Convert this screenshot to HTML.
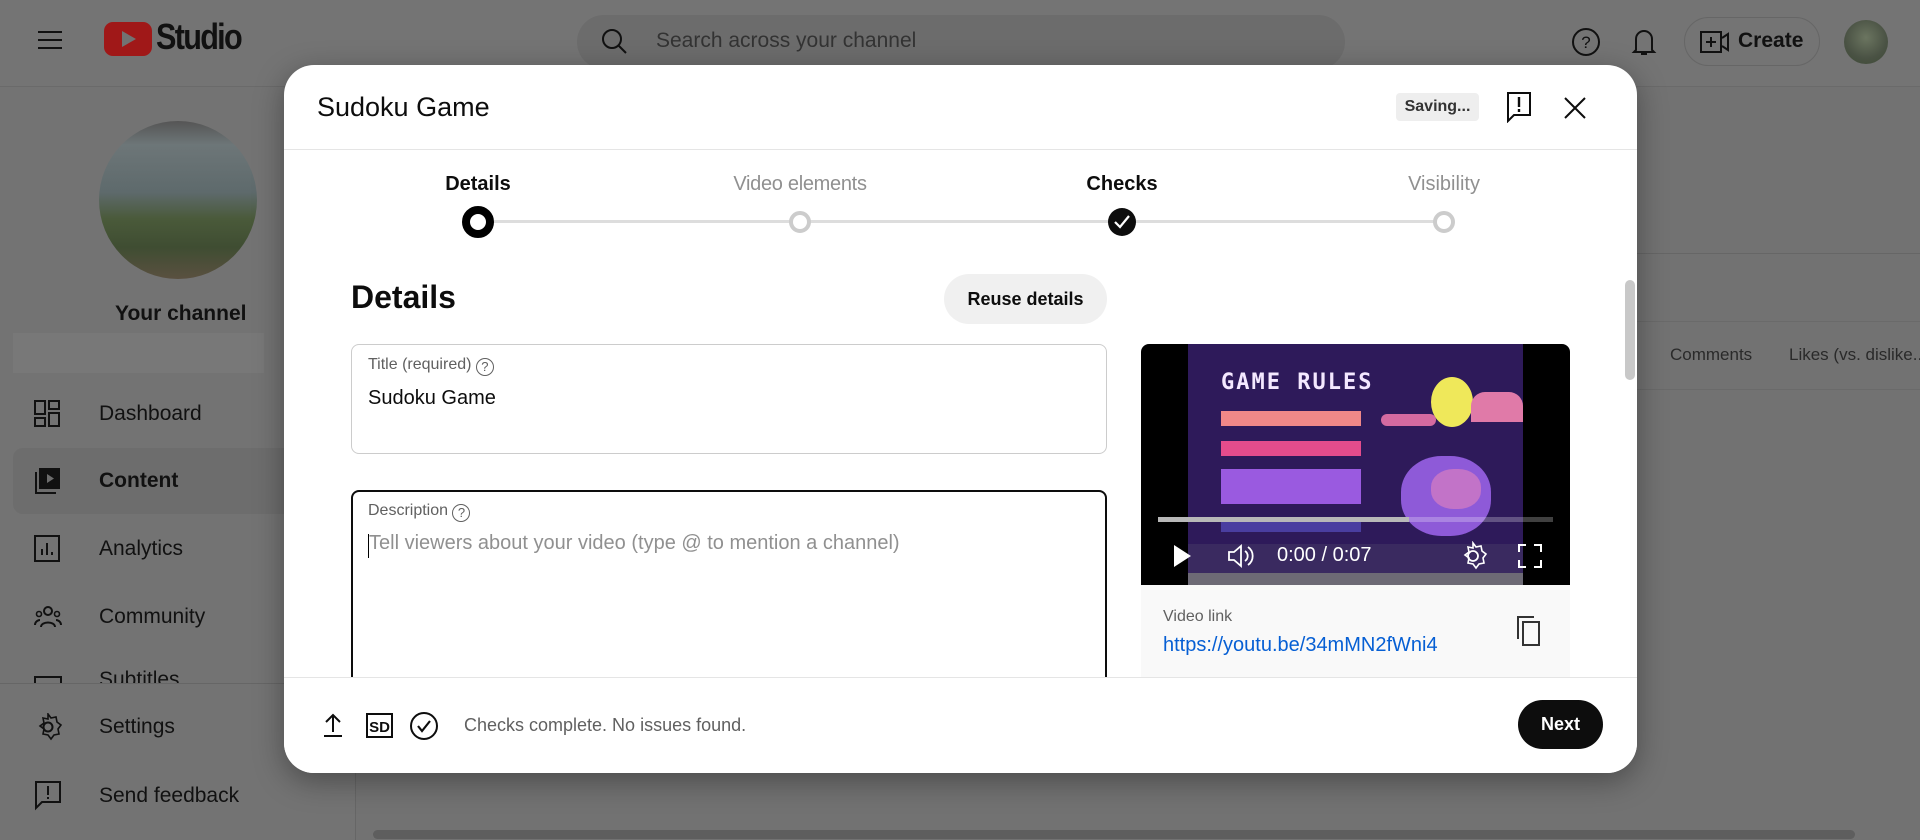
<!DOCTYPE html>
<html><head><meta charset="utf-8"><style>
*{box-sizing:border-box;margin:0;padding:0}
body{width:1920px;height:840px;overflow:hidden;background:#727272;font-family:"Liberation Sans",Roboto,sans-serif;position:relative;color:#0d0d0d}
.abs{position:absolute}
.side{left:0;top:87px;width:356px;height:753px;background:#737373;border-right:1px solid #666}
.mi{position:absolute;left:99px;font-size:21px;color:#111}
.ic{position:absolute;left:34px}
.modal{left:284px;top:65px;width:1353px;height:708px;background:#fff;border-radius:30px;box-shadow:0 8px 30px rgba(0,0,0,.35);overflow:hidden}
.lbl{font-size:20px;position:absolute;transform:translateX(-50%);white-space:nowrap}
.dot{position:absolute;width:18px;height:18px;border-radius:50%;border:3px solid #ccc;background:#fff;transform:translate(-50%,-50%)}
</style></head><body>
<div class="abs" style="left:0;top:0;width:1920px;height:87px;background:#747474;border-bottom:1px solid #6a6a6a"></div>
<svg class="abs" style="left:36px;top:28px" width="28" height="24"><path d="M2 4h24M2 12h24M2 20h24" stroke="#111" stroke-width="2"/></svg>
<div class="abs" style="left:104px;top:22px;width:48px;height:34px;background:#a01818;border-radius:9px"></div>
<svg class="abs" style="left:120px;top:30px" width="18" height="18"><path d="M2 1L16 9L2 17Z" fill="#727272"/></svg>
<div class="abs" style="left:156px;top:16px;font-size:36px;font-weight:bold;letter-spacing:-2px;color:#111;transform:scaleX(.85);transform-origin:left">Studio</div>
<div class="abs" style="left:577px;top:15px;width:768px;height:54px;background:#6c6c6c;border-radius:27px"></div>
<svg class="abs" style="left:600px;top:27px" width="30" height="30"><circle cx="12" cy="12" r="9" stroke="#111" stroke-width="2" fill="none"/><path d="M18 18l8 8" stroke="#111" stroke-width="2"/></svg>
<div class="abs" style="left:656px;top:29px;font-size:21px;color:#333">Search across your channel</div>
<svg class="abs" style="left:1571px;top:27px" width="30" height="30"><circle cx="15" cy="15" r="13" stroke="#111" stroke-width="2" fill="none"/><text x="15" y="21" font-size="17" text-anchor="middle" font-family="Liberation Sans" fill="#111">?</text></svg>
<svg class="abs" style="left:1630px;top:26px" width="28" height="32"><path d="M6 24V13a8 8 0 0 1 16 0v11l2 2H4z" stroke="#111" stroke-width="2" fill="none"/><path d="M11 28h6" stroke="#111" stroke-width="2"/></svg>
<div class="abs" style="left:1684px;top:17px;width:136px;height:49px;border:1px solid #666;border-radius:25px"></div>
<svg class="abs" style="left:1700px;top:30px" width="30" height="24"><rect x="1" y="2" width="20" height="20" stroke="#111" stroke-width="2" fill="none"/><path d="M11 7v10M6 12h10M22 8l6-4v16l-6-4" stroke="#111" stroke-width="2" fill="none"/></svg>
<div class="abs" style="left:1738px;top:29px;font-size:21px;font-weight:bold;color:#111">Create</div>
<div class="abs" style="left:1844px;top:20px;width:44px;height:44px;border-radius:50%;background:radial-gradient(circle at 50% 40%,#6b7560,#4a5244 60%,#3d4a35)"></div>
<div class="abs side"></div>
<div class="abs" style="left:99px;top:121px;width:158px;height:158px;border-radius:50%;background:linear-gradient(180deg,#555 0%,#6d7678 15%,#5e6a6c 45%,#4a5a3a 62%,#3f4d32 80%,#5a5040 100%)"></div>
<div class="abs" style="left:115px;top:302px;font-size:21px;font-weight:bold;color:#111">Your channel</div>
<div class="abs" style="left:13px;top:333px;width:251px;height:40px;background:#787878"></div>
<div class="abs" style="left:13px;top:448px;width:330px;height:66px;background:#6d6d6d;border-radius:10px"></div>
<svg class="ic" style="top:400px" width="28" height="28"><rect x="1" y="1" width="10" height="13" stroke="#111" stroke-width="2" fill="none"/><rect x="15" y="1" width="10" height="8" stroke="#111" stroke-width="2" fill="none"/><rect x="1" y="18" width="10" height="8" stroke="#111" stroke-width="2" fill="none"/><rect x="15" y="13" width="10" height="13" stroke="#111" stroke-width="2" fill="none"/></svg>
<div class="mi" style="top:402px">Dashboard</div>
<svg class="ic" style="top:467px" width="28" height="28"><rect x="5" y="1" width="21" height="21" fill="#111"/><path d="M13 7l7 4.5-7 4.5z" fill="#6d6d6d"/><path d="M2 5v21h20" stroke="#111" stroke-width="2" fill="none"/></svg>
<div class="mi" style="top:469px;font-weight:bold">Content</div>
<svg class="ic" style="top:535px" width="28" height="28"><rect x="1" y="1" width="24" height="25" stroke="#111" stroke-width="2" fill="none"/><path d="M8 20v-6M13 20V8M18 20v-3" stroke="#111" stroke-width="2"/></svg>
<div class="mi" style="top:537px">Analytics</div>
<svg class="ic" style="top:603px" width="28" height="28"><circle cx="14" cy="8" r="4" stroke="#111" stroke-width="2" fill="none"/><circle cx="5" cy="11" r="2.5" stroke="#111" stroke-width="1.6" fill="none"/><circle cx="23" cy="11" r="2.5" stroke="#111" stroke-width="1.6" fill="none"/><path d="M7 24c0-6 14-6 14 0M1 22c0-4 4-5 5-5M27 22c0-4-4-5-5-5" stroke="#111" stroke-width="2" fill="none"/></svg>
<div class="mi" style="top:605px">Community</div>
<div class="abs" style="left:34px;top:676px;width:28px;height:7px;border:2px solid #111;border-bottom:none"></div>
<div class="mi" style="top:668px;height:15px;overflow:hidden">Subtitles</div>
<div class="abs" style="left:0;top:683px;width:356px;height:1px;background:#666"></div>
<svg class="ic" style="top:713px" width="28" height="28"><circle cx="14" cy="14" r="4.5" stroke="#111" stroke-width="2" fill="none"/><path d="M14 1l3 4 5-1 1 5 4 3-3 4 1 5-5 1-3 4-3-4-5-1 1-5-4-3 4-3-1-5 5 1z" stroke="#111" stroke-width="1.6" fill="none"/></svg>
<div class="mi" style="top:715px">Settings</div>
<svg class="ic" style="top:780px" width="28" height="32"><path d="M2 2h24v20H8l-6 6z" stroke="#111" stroke-width="2" fill="none"/><path d="M14 6v9M14 17v2" stroke="#111" stroke-width="2"/></svg>
<div class="mi" style="top:784px">Send feedback</div>
<div class="abs" style="left:1637px;top:253px;width:283px;height:1px;background:#666"></div>
<div class="abs" style="left:1637px;top:321px;width:283px;height:1px;background:#6a6a6a"></div>
<div class="abs" style="left:1670px;top:345px;font-size:17px;color:#2a2a2a">Comments</div>
<div class="abs" style="left:1789px;top:345px;font-size:17px;color:#2a2a2a;white-space:nowrap">Likes (vs. dislike...</div>
<div class="abs" style="left:1637px;top:389px;width:283px;height:1px;background:#6a6a6a"></div>
<div class="abs" style="left:373px;top:830px;width:1482px;height:9px;background:#5e5e5e;border-radius:5px"></div>

<div class="abs modal">
  <div class="abs" style="left:33px;top:27px;font-size:27px;color:#0d0d0d">Sudoku Game</div>
  <div class="abs" style="left:1112px;top:28px;width:83px;height:28px;background:#eee;border-radius:4px;font-size:16px;font-weight:bold;color:#333;text-align:center;line-height:28px">Saving...</div>
  <svg class="abs" style="left:1222px;top:26px" width="26" height="32"><path d="M2 2h22v22H8l-6 6z" stroke="#0d0d0d" stroke-width="2" fill="none"/><path d="M13 6v10M13 18v3" stroke="#0d0d0d" stroke-width="2.4"/></svg>
  <svg class="abs" style="left:1279px;top:31px" width="24" height="24"><path d="M2 2l20 20M22 2L2 22" stroke="#0d0d0d" stroke-width="2"/></svg>
  <div class="abs" style="left:0;top:84px;width:1353px;height:1px;background:#e5e5e5"></div>
  <div class="abs" style="left:194px;top:155px;width:964px;height:3px;background:#ddd"></div>
  <div class="lbl" style="left:194px;top:108px;font-weight:bold">Details</div>
  <div class="lbl" style="left:516px;top:108px;color:#909090;letter-spacing:-0.3px">Video elements</div>
  <div class="lbl" style="left:838px;top:108px;font-weight:bold">Checks</div>
  <div class="lbl" style="left:1160px;top:108px;color:#909090">Visibility</div>
  <div class="dot" style="left:194px;top:157px;width:32px;height:32px;border:8px solid #000"></div>
  <div class="dot" style="left:516px;top:157px;width:22px;height:22px;border:4px solid #ccc"></div>
  <div class="dot" style="left:838px;top:157px;width:28px;height:28px;border:none;background:#0d0d0d"></div>
  <svg class="abs" style="left:828px;top:148px" width="20" height="18"><path d="M3 9l5 5 9-11" stroke="#fff" stroke-width="2.2" fill="none"/></svg>
  <div class="dot" style="left:1160px;top:157px;width:22px;height:22px;border:4px solid #ccc"></div>
  <div class="abs" style="left:67px;top:214px;font-size:32px;font-weight:bold;color:#0d0d0d">Details</div>
  <div class="abs" style="left:660px;top:209px;width:163px;height:50px;background:#f0f0f0;border-radius:25px;font-size:18px;font-weight:bold;text-align:center;line-height:50px">Reuse details</div>
  <div class="abs" style="left:67px;top:279px;width:756px;height:110px;border:1px solid #ccc;border-radius:8px"></div>
  <div class="abs" style="left:84px;top:291px;font-size:16px;color:#606060">Title (required) <span style="display:inline-block;width:18px;height:18px;border:1.5px solid #606060;border-radius:50%;font-size:13px;text-align:center;line-height:15px;vertical-align:-2px">?</span></div>
  <div class="abs" style="left:84px;top:322px;font-size:20px">Sudoku Game</div>
  <div class="abs" style="left:67px;top:425px;width:756px;height:240px;border:2px solid #0d0d0d;border-radius:8px"></div>
  <div class="abs" style="left:84px;top:437px;font-size:16px;color:#606060">Description <span style="display:inline-block;width:18px;height:18px;border:1.5px solid #606060;border-radius:50%;font-size:13px;text-align:center;line-height:15px;vertical-align:-2px">?</span></div>
  <div class="abs" style="left:84px;top:469px;width:1px;height:24px;background:#000"></div>
  <div class="abs" style="left:85px;top:467px;font-size:20px;color:#909090">Tell viewers about your video (type @ to mention a channel)</div>
  <!-- video -->
  <div class="abs" style="left:857px;top:279px;width:429px;height:241px;background:#000;border-radius:8px 8px 0 0;overflow:hidden">
    <div class="abs" style="left:47px;top:0;width:335px;height:241px;background:#2e1a5a"></div>
    <div class="abs" style="left:80px;top:26px;font-size:22px;font-weight:bold;color:#f4e8ff;letter-spacing:2px;font-family:'DejaVu Sans Mono',monospace">GAME RULES</div>
    <div class="abs" style="left:80px;top:67px;width:140px;height:15px;background:#f08888"></div>
    <div class="abs" style="left:80px;top:97px;width:140px;height:15px;background:#e44c8c"></div>
    <div class="abs" style="left:80px;top:125px;width:140px;height:35px;background:#9a5ae0"></div>
    <div class="abs" style="left:80px;top:176px;width:140px;height:12px;background:#4a3ea0"></div>
    <div class="abs" style="left:290px;top:33px;width:42px;height:50px;border-radius:50%;background:#efe85a"></div>
    <div class="abs" style="left:240px;top:70px;width:55px;height:12px;border-radius:6px;background:#d46aa0"></div>
    <div class="abs" style="left:330px;top:48px;width:52px;height:30px;border-radius:14px 14px 0 0;background:#e07aa8"></div>
    <div class="abs" style="left:260px;top:112px;width:90px;height:80px;border-radius:45%;background:#8e5ad8"></div>
    <div class="abs" style="left:290px;top:125px;width:50px;height:40px;border-radius:45%;background:#c273c8"></div>
    <div class="abs" style="left:47px;top:200px;width:335px;height:29px;background:#3a2a60"></div>
    <div class="abs" style="left:47px;top:229px;width:335px;height:12px;background:#6d6a75"></div>
    <div class="abs" style="left:17px;top:173px;width:395px;height:5px;background:rgba(255,255,255,.25)"></div>
    <div class="abs" style="left:17px;top:173px;width:251px;height:5px;background:#b8b8b8"></div>
  </div>
  <svg class="abs" style="left:887px;top:478px" width="22" height="26"><path d="M3 2l17 11L3 24z" fill="#fff"/></svg>
  <svg class="abs" style="left:942px;top:477px" width="30" height="28"><path d="M3 10h5l7-6v20l-7-6H3z" stroke="#fff" stroke-width="1.8" fill="none"/><path d="M19 9a6 6 0 0 1 0 10M22 5a11 11 0 0 1 0 18" stroke="#fff" stroke-width="1.8" fill="none"/></svg>
  <div class="abs" style="left:993px;top:479px;font-size:20px;color:#fff">0:00 / 0:07</div>
  <svg class="abs" style="left:1174px;top:476px" width="30" height="30"><circle cx="15" cy="15" r="5" stroke="#fff" stroke-width="1.8" fill="none"/><path d="M15 2l3 4 5-1 1 5 4 3-3 4 1 5-5 1-3 4-3-4-5-1 1-5-4-3 4-3-1-5 5 1z" stroke="#fff" stroke-width="1.6" fill="none"/></svg>
  <svg class="abs" style="left:1233px;top:478px" width="26" height="26"><path d="M2 9V2h7M17 2h7v7M24 17v7h-7M9 24H2v-7" stroke="#fff" stroke-width="2" fill="none"/></svg>
  <div class="abs" style="left:857px;top:520px;width:429px;height:93px;background:#f9f9f9"></div>
  <div class="abs" style="left:879px;top:543px;font-size:16px;color:#606060">Video link</div>
  <div class="abs" style="left:879px;top:569px;font-size:20px;color:#065fd4">https://youtu.be/34mMN2fWni4</div>
  <svg class="abs" style="left:1232px;top:550px" width="26" height="32"><path d="M2 24V2h16" stroke="#333" stroke-width="2" fill="none"/><rect x="7" y="7" width="16" height="23" stroke="#333" stroke-width="2" fill="none"/></svg>
  <div class="abs" style="left:1341px;top:215px;width:10px;height:100px;background:#c8c8c8;border-radius:5px"></div>
  <!-- footer -->
  <div class="abs" style="left:0;top:612px;width:1353px;height:96px;background:#fff;border-top:1px solid #e5e5e5"></div>
  <svg class="abs" style="left:38px;top:647px" width="22" height="26"><path d="M11 20V3M4 10l7-7 7 7M2 24h18" stroke="#0d0d0d" stroke-width="2" fill="none"/></svg>
  <svg class="abs" style="left:82px;top:648px" width="28" height="26"><rect x="1" y="1" width="25" height="23" stroke="#0d0d0d" stroke-width="2" fill="none"/><text x="13.5" y="19" font-size="15" font-weight="bold" text-anchor="middle" font-family="Liberation Sans" fill="#0d0d0d">SD</text></svg>
  <svg class="abs" style="left:124px;top:645px" width="32" height="32"><circle cx="16" cy="16" r="13" stroke="#0d0d0d" stroke-width="2" fill="none"/><path d="M10 16l4 5 8-10" stroke="#0d0d0d" stroke-width="2.2" fill="none"/></svg>
  <div class="abs" style="left:180px;top:650px;font-size:18px;color:#606060">Checks complete. No issues found.</div>
  <div class="abs" style="left:1234px;top:635px;width:85px;height:49px;background:#0d0d0d;border-radius:25px;color:#fff;font-size:18px;font-weight:bold;text-align:center;line-height:49px">Next</div>
</div>
</body></html>
